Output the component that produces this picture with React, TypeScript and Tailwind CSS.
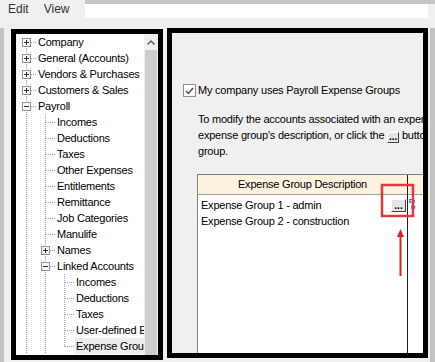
import React from "react"

type Node = {
  label: string
  depth: number
  box?: "+" | "-"
  first?: boolean
  last?: boolean
  guides: boolean[]
  selected?: boolean
}

const nodes: Node[] = [
  { label: "Company", depth: 0, box: "+", first: true, guides: [] },
  { label: "General (Accounts)", depth: 0, box: "+", guides: [] },
  { label: "Vendors & Purchases", depth: 0, box: "+", guides: [] },
  { label: "Customers & Sales", depth: 0, box: "+", guides: [] },
  { label: "Payroll", depth: 0, box: "-", guides: [] },
  { label: "Incomes", depth: 1, guides: [true] },
  { label: "Deductions", depth: 1, guides: [true] },
  { label: "Taxes", depth: 1, guides: [true] },
  { label: "Other Expenses", depth: 1, guides: [true] },
  { label: "Entitlements", depth: 1, guides: [true] },
  { label: "Remittance", depth: 1, guides: [true] },
  { label: "Job Categories", depth: 1, guides: [true] },
  { label: "Manulife", depth: 1, guides: [true] },
  { label: "Names", depth: 1, box: "+", guides: [true] },
  { label: "Linked Accounts", depth: 1, box: "-", guides: [true] },
  { label: "Incomes", depth: 2, guides: [true, true] },
  { label: "Deductions", depth: 2, guides: [true, true] },
  { label: "Taxes", depth: 2, guides: [true, true] },
  { label: "User-defined Expenses", depth: 2, guides: [true, true] },
  { label: "Expense Groups", depth: 2, last: true, guides: [true, true], selected: true },
]

const Guide = ({ on }: { on: boolean }) => (
  <svg width="19" height="16" className="shrink-0">
    {on && (
      <line x1="9.5" y1="0" x2="9.5" y2="16" stroke="#a0a0a0" strokeDasharray="1 1" />
    )}
  </svg>
)

const Connector = ({ node }: { node: Node }) => (
  <svg width="19" height="16" className="shrink-0" shapeRendering="crispEdges">
    <line
      x1="9.5"
      y1={node.first ? 8 : 0}
      x2="9.5"
      y2={node.last ? 9 : 16}
      stroke="#a0a0a0"
      strokeDasharray="1 1"
    />
    <line x1="10" y1="8.5" x2="19" y2="8.5" stroke="#a0a0a0" strokeDasharray="1 1" />
    {node.box && (
      <g>
        <rect x="5.5" y="4.5" width="8" height="8" fill="#f7f7f7" stroke="#919191" />
        <line x1="7" y1="8.5" x2="12" y2="8.5" stroke="#2a2a4a" />
        {node.box === "+" && <line x1="9.5" y1="6" x2="9.5" y2="11" stroke="#2a2a4a" />}
      </g>
    )}
  </svg>
)

const TreeRow = ({ node }: { node: Node }) => (
  <div className="flex h-4 items-center whitespace-nowrap">
    {node.guides.map((g, i) => (
      <Guide key={i} on={g} />
    ))}
    <Connector node={node} />
    <span
      className={
        "ml-[1px] pl-[1px] pr-2 leading-4 " + (node.selected ? "bg-[#ececec]" : "")
      }
    >
      {node.label}
    </span>
  </div>
)

const DotsButton = ({ small }: { small?: boolean }) => (
  <span
    className={
      "inline-flex items-end justify-center border border-t-white border-l-white border-r-[#404040] border-b-[#404040] bg-[#e4e4e4] text-[10px] font-bold leading-none tracking-normal " +
      (small ? "w-[12px] h-[11px] align-[-1px]" : "w-[15px] h-[13px]")
    }
  >
    ...
  </span>
)

export default function App() {
  return (
    <div className="relative w-[435px] h-[362px] overflow-hidden bg-[#f0f0f0] text-[11px] tracking-[-0.22px] text-black font-['Liberation_Sans',Arial,sans-serif] flex flex-col">
      {/* menu bar */}
      <div className="h-[18px] shrink-0 flex">
        <div className="flex items-center gap-[15px] pl-[8px] pr-4 text-[12px] tracking-normal text-[#333]">
          <span>Edit</span>
          <span>View</span>
        </div>
        <div className="flex-1 flex flex-col">
          <div className="h-[4px] bg-[#c6c6c6]" />
          <div className="flex-1 bg-white mr-[7px]" />
        </div>
      </div>

      <div className="flex-1 flex pt-[10px]">
        <div className="w-[4px] bg-[#c3c3c3]" />
        <div className="w-[7px]" />

        {/* tree panel */}
        <div className="mt-[1px] w-[152px] h-[331px] border-[5px] border-black bg-white flex">
          <div className="flex-1 overflow-hidden pl-[1px]">
            {nodes.map((n, i) => (
              <TreeRow key={i} node={n} />
            ))}
          </div>
          <div className="w-[14px] flex flex-col bg-[#f0f0f0]">
            <div className="h-[16px] flex items-center justify-center">
              <svg width="8" height="5">
                <path d="M0.5 4.5 L4 1 L7.5 4.5" fill="none" stroke="#606060" strokeWidth="1.5" />
              </svg>
            </div>
            <div className="flex-1 mx-[1px] bg-[#cdcdcd]" />
          </div>
        </div>

        <div className="w-[4px]" />

        {/* right panel */}
        <div className="w-[261px] h-[330px] border-[5px] border-black bg-[#f0f0f0] flex flex-col overflow-hidden">
          <div className="mt-[51px] ml-[11px] flex items-center h-[13px]">
            <span className="w-[13px] h-[13px] border border-[#8e8f8f] bg-white flex items-center justify-center">
              <svg width="9" height="8">
                <path d="M1 4 L3.5 6.5 L8 1" fill="none" stroke="#4a4a4a" strokeWidth="1.4" />
              </svg>
            </span>
            <span className="ml-[2px] whitespace-nowrap">My company uses Payroll Expense Groups</span>
          </div>

          <div className="mt-[14px] ml-[26px] leading-4 whitespace-nowrap">
            <div>To modify the accounts associated with an expense group, double-click the</div>
            <div>
              expense group's description, or click the <DotsButton small /> button to edit the
            </div>
            <div>group.</div>
          </div>

          <div className="mt-[15px] ml-[25px] flex-1 flex border-l border-t border-[#808080] bg-white">
            <div className="w-[210px] shrink-0 flex flex-col border-r border-[#202020]">
              <div className="h-[20px] bg-[#fbf3dd] border-b border-[#a0a0a0] flex items-center justify-center">
                Expense Group Description
              </div>
              <div className="h-4 mt-[2px] flex items-center pl-[3px]">
                <span className="flex-1">Expense Group 1 - admin</span>
                <span className="mr-[1px]">
                  <DotsButton />
                </span>
              </div>
              <div className="h-4 flex items-center pl-[3px]">Expense Group 2 - construction</div>
            </div>
            <div className="w-[60px] shrink-0 flex flex-col">
              <div className="h-[20px] bg-[#fbf3dd] border-b border-[#a0a0a0]" />
              <div className="mt-[3px] ml-[1px] w-[13px] h-[13px] flex flex-col text-[5px] leading-[6px] text-[#2040c0] font-bold">
                <span>En</span>
                <span className="pl-[2px]">Fr</span>
              </div>
            </div>
          </div>
        </div>

        <div className="w-[2px]" />
        <div className="flex-1 bg-[#c3c3c3]" />
      </div>

      {/* red callout */}
      <svg className="absolute left-0 top-0 pointer-events-none" width="435" height="362">
        <rect x="382" y="185" width="31" height="31" fill="none" stroke="#e03a3a" strokeWidth="2.5" />
        <line x1="400.5" y1="276" x2="400.5" y2="236" stroke="#e02020" strokeWidth="2" />
        <path d="M397 237 L400.5 229 L404 237 Z" fill="#e02020" />
      </svg>
    </div>
  )
}
